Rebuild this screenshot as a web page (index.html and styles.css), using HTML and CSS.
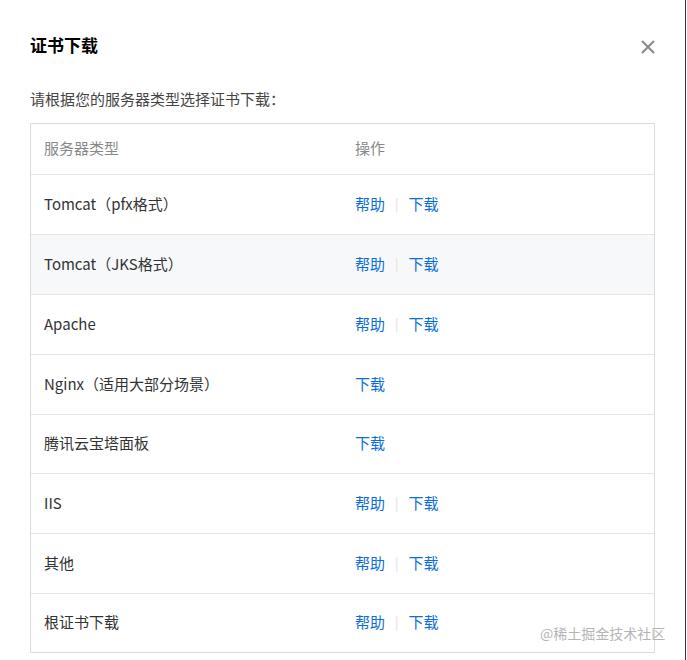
FILE: index.html
```html
<!DOCTYPE html>
<html lang="zh">
<head>
<meta charset="utf-8">
<link rel="stylesheet" href="styles.css">
</head>
<body>
<div class="page">
  <div class="dialog">
    <div class="head">
      <h1 class="title">证书下载</h1>
      <svg class="close" width="16" height="16" viewBox="0 0 16 16"><path d="M2 2L14 14M14 2L2 14" stroke="#888" stroke-width="2" fill="none"/></svg>
    </div>
    <p class="intro">请根据您的服务器类型选择证书下载：</p>
    <div class="table">
      <div class="row header"><div class="c1">服务器类型</div><div class="c2">操作</div></div>
      <div class="row"><div class="c1">Tomcat（pfx格式）</div><div class="c2"><a>帮助</a><span class="sep">|</span><a>下载</a></div></div>
      <div class="row hover"><div class="c1">Tomcat（JKS格式）</div><div class="c2"><a>帮助</a><span class="sep">|</span><a>下载</a></div></div>
      <div class="row"><div class="c1">Apache</div><div class="c2"><a>帮助</a><span class="sep">|</span><a>下载</a></div></div>
      <div class="row"><div class="c1">Nginx（适用大部分场景）</div><div class="c2"><a>下载</a></div></div>
      <div class="row short"><div class="c1">腾讯云宝塔面板</div><div class="c2"><a>下载</a></div></div>
      <div class="row"><div class="c1">IIS</div><div class="c2"><a>帮助</a><span class="sep">|</span><a>下载</a></div></div>
      <div class="row"><div class="c1">其他</div><div class="c2"><a>帮助</a><span class="sep">|</span><a>下载</a></div></div>
      <div class="row short"><div class="c1">根证书下载</div><div class="c2"><a>帮助</a><span class="sep">|</span><a>下载</a></div></div>
    </div>
  </div>
  <div class="watermark">@稀土掘金技术社区</div>
</div>
</body>
</html>
```

FILE: styles.css
```css
html, body {
  margin: 0;
  padding: 0;
  background: #fff;
}
body {
  font-family: "Noto Sans CJK SC", "Noto Sans", sans-serif;
  color: #333;
}
.page {
  position: relative;
  width: 685px;
  height: 660px;
  border-right: 1px solid #333;
  overflow: hidden;
}
.dialog {
  padding: 0 30px;
}
.head {
  display: flex;
  justify-content: space-between;
  align-items: center;
  height: 24px;
  margin-top: 33px;
}
.title {
  margin: 0;
  font-size: 17px;
  font-weight: 700;
  color: #000;
  line-height: 24px;
}
.close {
  margin-top: 4px;
  margin-right: -1px;
}
.intro {
  margin: 31px 0 0;
  font-size: 15px;
  line-height: 22px;
  color: #444;
}
.table {
  margin-top: 13px;
  border: 1px solid #dcdcdc;
}
.row {
  display: flex;
  align-items: center;
  height: 60px;
  padding-bottom: 3px;
  border-top: 1px solid #e5e5e5;
  box-sizing: border-box;
  font-size: 15px;
}
.row.header {
  height: 50px;
  border-top: none;
  color: #888;
}
.row.hover {
  background: #f7f8fa;
}
.row.short {
  height: 59px;
}
.c1 {
  width: 300px;
  padding-left: 13px;
}
.c2 {
  padding-left: 11px;
  display: flex;
  align-items: center;
}
.c2 a {
  color: #0c6ede;
}
.sep {
  color: #ddd;
  margin: 0 10px;
  font-size: 13px;
}
.watermark {
  position: absolute;
  left: 540px;
  top: 623px;
  font-size: 14px;
  color: #b5b5b5;
  line-height: 20px;
}
```
